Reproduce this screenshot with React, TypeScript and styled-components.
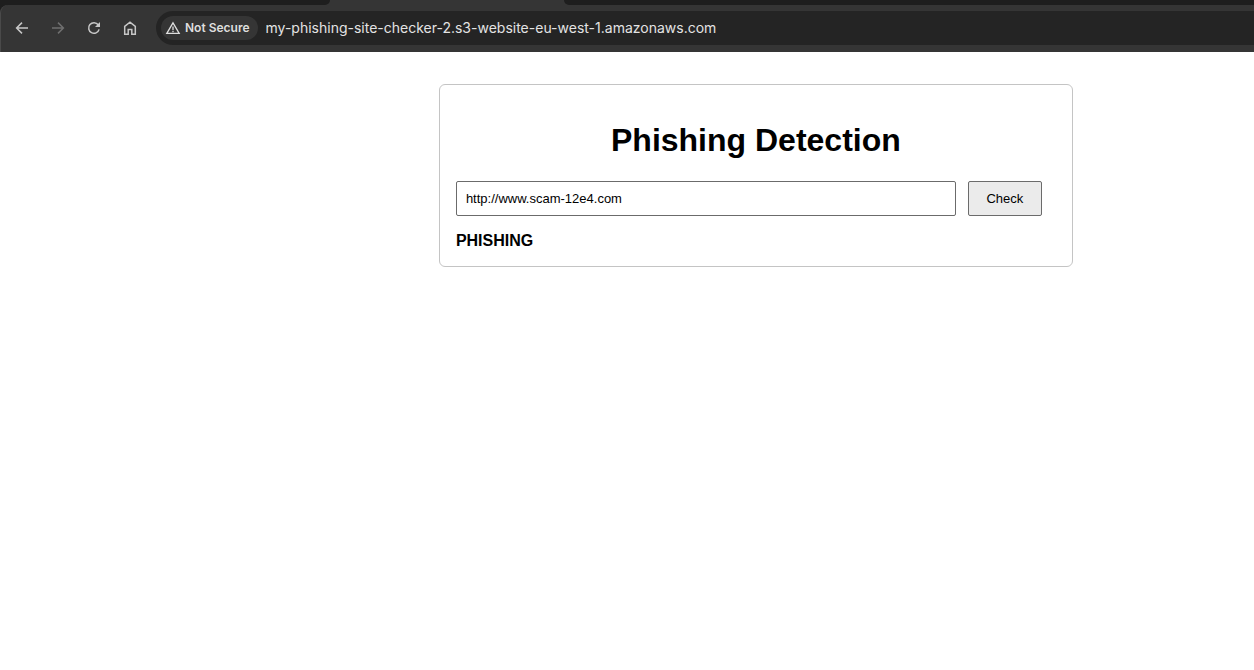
import React, { useState } from "react";
import styled, { createGlobalStyle } from "styled-components";

const GlobalStyle = createGlobalStyle`
  *, *::before, *::after { box-sizing: border-box; }
  body {
    margin: 0;
    background: #ffffff;
    color: #000000;
    font-family: Arial, "Liberation Sans", sans-serif;
  }
`;

const Chrome = styled.header`
  background: #1e1e1e;
  font-family: Inter, sans-serif;
`;

const TabStrip = styled.div`
  display: grid;
  grid-template-columns: 330px 234px 1fr;
  height: 5px;
  background: #353535;
`;

const InactiveTabs = styled.div<{ $side: "left" | "right" }>`
  background: #1e1e1e;
  border-radius: ${(p) => (p.$side === "left" ? "0 0 12px 0" : "0 0 0 12px")};
`;

const Toolbar = styled.div`
  display: flex;
  align-items: center;
  gap: 8px;
  height: 47px;
  padding: 0 0 1px 7px;
  background: #353535;
  border-left: 1px solid #4a4a4a;
  border-top-left-radius: 8px;
`;

const NavButton = styled.button`
  display: flex;
  align-items: center;
  justify-content: center;
  width: 28px;
  height: 28px;
  padding: 0;
  border: 0;
  background: none;
  color: #c7c7c7;

  &:disabled { color: #6f6f6f; }
`;

const AddressBar = styled.div`
  display: flex;
  align-items: center;
  flex: 1;
  height: 34px;
  margin-left: 4px;
  padding-left: 5px;
  gap: 8px;
  background: #242424;
  border-radius: 17px 0 0 17px;
`;

const SecurityChip = styled.button`
  display: flex;
  align-items: center;
  gap: 4px;
  height: 24px;
  padding: 0 8px 0 4px;
  border: 0;
  border-radius: 12px;
  background: #353535;
  color: #dedede;
  font: 600 12px/16px Inter, sans-serif;
  white-space: nowrap;
`;

const Address = styled.input`
  flex: 1;
  min-width: 0;
  padding: 0;
  border: 0;
  outline: 0;
  background: none;
  color: #e3e3e3;
  font: 400 14px/20px Inter, sans-serif;
`;

const Page = styled.main`
  padding: 32px 16px 32px 35%;
`;

const Card = styled.section`
  max-width: 634px;
  padding: 16px;
  border: 1px solid #c4c4c4;
  border-radius: 6px;
`;

const Title = styled.h1`
  margin: 21px 0 22px;
  font-size: 32px;
  line-height: 37px;
  text-align: center;
`;

const CheckForm = styled.form`
  display: flex;
  gap: 12px;
  padding-right: 14px;
`;

const UrlInput = styled.input`
  flex: 1;
  min-width: 0;
  height: 35px;
  padding: 0 9px;
  border: 1px solid #6b6b6b;
  border-radius: 2px;
  background: #ffffff;
  color: #000000;
  font: 13px/16px Arial, "Liberation Sans", sans-serif;
`;

const CheckButton = styled.button`
  width: 74px;
  height: 35px;
  padding: 0;
  border: 1px solid #6b6b6b;
  border-radius: 2px;
  background: #ebebeb;
  color: #000000;
  font: 13px/16px Arial, "Liberation Sans", sans-serif;
`;

const Result = styled.output`
  display: block;
  margin-top: 16px;
  font-size: 16px;
  font-weight: 700;
  line-height: 18px;
`;

const Icon = ({ children }: { children: React.ReactNode }) => (
  <svg
    width="16"
    height="16"
    viewBox="0 0 16 16"
    fill="none"
    stroke="currentColor"
    strokeWidth="1.5"
    aria-hidden="true"
  >
    {children}
  </svg>
);

export default function App() {
  const [address, setAddress] = useState("my-phishing-site-checker-2.s3-website-eu-west-1.amazonaws.com");
  const [url, setUrl] = useState("http://www.scam-12e4.com");

  return (
    <>
      <GlobalStyle />
      <Chrome>
        <TabStrip>
          <InactiveTabs $side="left" />
          <span />
          <InactiveTabs $side="right" />
        </TabStrip>
        <Toolbar>
          <NavButton aria-label="Back">
            <Icon><path d="M14 8H3M8 2.6 2.6 8 8 13.4" /></Icon>
          </NavButton>
          <NavButton aria-label="Forward" disabled>
            <Icon><path d="M2 8h11M8 2.6 13.4 8 8 13.4" /></Icon>
          </NavButton>
          <NavButton aria-label="Reload">
            <Icon>
              <path d="M12.2 4.8A5.3 5.3 0 1 0 13.1 9.4" />
              <path d="M14 2v5H9z" fill="currentColor" stroke="none" />
            </Icon>
          </NavButton>
          <NavButton aria-label="Home">
            <Icon><path d="M2.7 6.3 8 2.1l5.3 4.2v8H9.8V9.4H6.2v4.9H2.7z" /></Icon>
          </NavButton>
          <AddressBar>
            <SecurityChip>
              <Icon>
                <path d="M8 2.8 14.2 13.4H1.8z" strokeWidth="1.3" />
                <path d="M8 6.4v3.6M8 10.8v1.4" strokeWidth="1.3" />
              </Icon>
              Not Secure
            </SecurityChip>
            <Address aria-label="Address" value={address} onChange={(e) => setAddress(e.target.value)} />
          </AddressBar>
        </Toolbar>
      </Chrome>
      <Page>
        <Card>
          <Title>Phishing Detection</Title>
          <CheckForm onSubmit={(e) => e.preventDefault()}>
            <UrlInput aria-label="Site URL" value={url} onChange={(e) => setUrl(e.target.value)} />
            <CheckButton type="submit">Check</CheckButton>
          </CheckForm>
          <Result>PHISHING</Result>
        </Card>
      </Page>
    </>
  );
}
